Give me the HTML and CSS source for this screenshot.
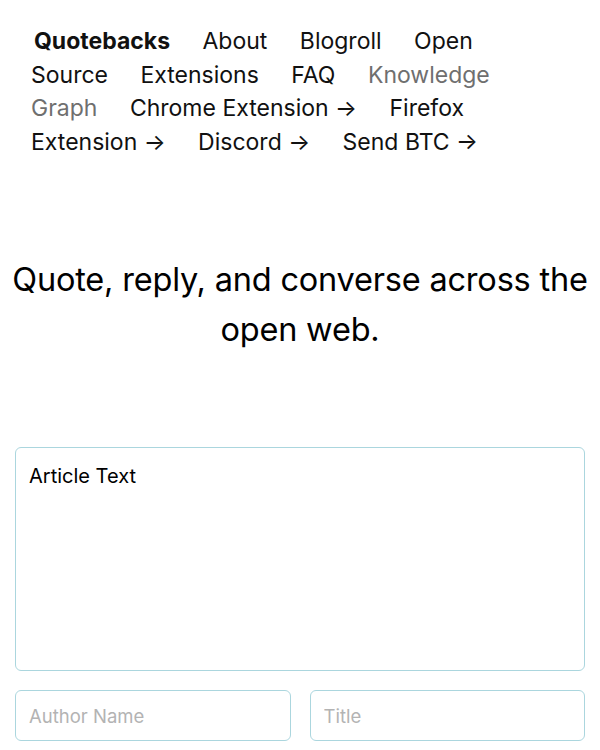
FILE: index.html
```html
<!DOCTYPE html>
<html lang="en">
<head>
<meta charset="utf-8">
<title>Quotebacks</title>
<link rel="stylesheet" href="styles.css">
</head>
<body>
<nav class="nav">
  <a class="nav-link brand" href="#">Quotebacks</a>
  <a class="nav-link" href="#">About</a>
  <a class="nav-link" href="#">Blogroll</a>
  <a class="nav-link" href="#">Open Source</a>
  <a class="nav-link" href="#">Extensions</a>
  <a class="nav-link" href="#">FAQ</a>
  <a class="nav-link muted" href="#">Knowledge Graph</a>
  <a class="nav-link" href="#">Chrome Extension →</a>
  <a class="nav-link" href="#">Firefox Extension →</a>
  <a class="nav-link" href="#">Discord →</a>
  <a class="nav-link" href="#">Send BTC →</a>
</nav>
<main class="main">
  <h1 class="headline">Quote, reply, and converse across the open web.</h1>
  <form class="form">
    <textarea class="field article">Article Text</textarea>
    <div class="row">
      <input class="field small" type="text" placeholder="Author Name">
      <input class="field small" type="text" placeholder="Title">
    </div>
  </form>
</main>
</body>
</html>
```
FILE: styles.css
```css
* { box-sizing: border-box; }
body {
  margin: 0;
  font-family: Inter, "Noto Sans", sans-serif;
  color: #000;
  background: #fff;
}
.nav {
  padding: 25px 30px 0 31px;
  font-size: 23px;
  line-height: 33.5px;
  max-width: 560px;
}
.nav-link {
  color: #111;
  text-decoration: none;
  margin-right: 26px;
}
.brand {
  font-weight: 700;
  margin-left: 3px;
}
.muted { color: #6f6f6f; }
.main {
  padding: 0 15px;
}
.headline {
  margin: 96px -15px 0;
  font-weight: 400;
  font-size: 32.5px;
  line-height: 50px;
  text-align: center;
  letter-spacing: -0.2px;
}
.form {
  margin-top: 92px;
}
.field {
  display: block;
  width: 100%;
  border: 1.5px solid #abd6de;
  border-radius: 6px;
  font-family: inherit;
  color: #000;
  background: #fff;
  outline: none;
}
.article {
  height: 224px;
  padding: 16px 13px;
  font-size: 20px;
  resize: none;
}
.row {
  display: flex;
  gap: 19px;
  margin-top: 19px;
}
.small {
  height: 51px;
  padding: 0 13px;
  font-size: 18.5px;
}
.small::placeholder { color: #b3b3b3; }
```
